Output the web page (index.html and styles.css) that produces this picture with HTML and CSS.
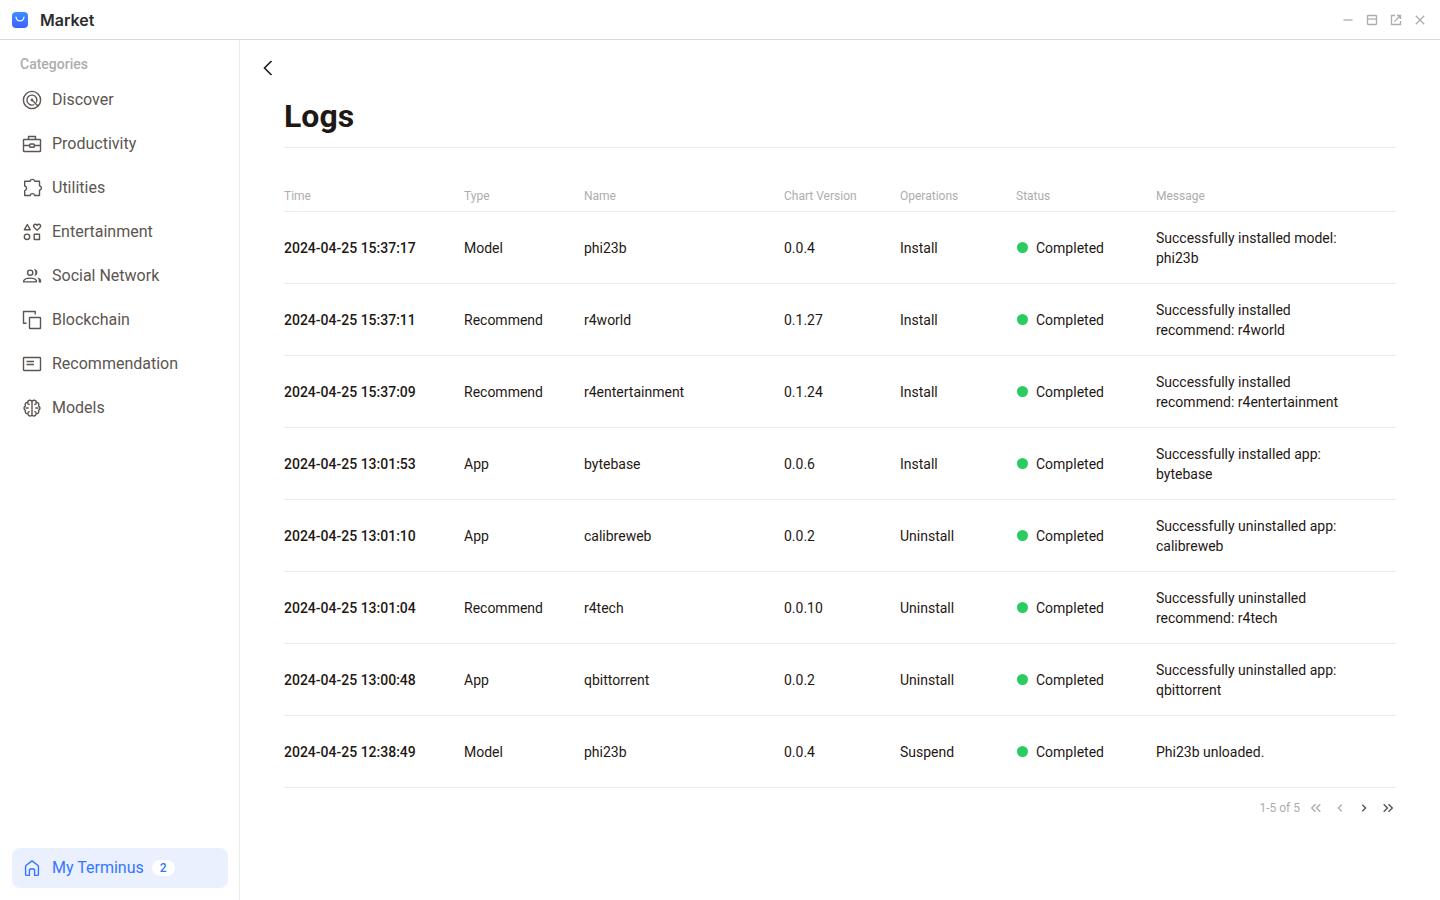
FILE: index.html
```html
<!DOCTYPE html>
<html lang="en">
<head>
<meta charset="utf-8">
<title>Market</title>
<link rel="stylesheet" href="styles.css">
</head>
<body>
<header class="titlebar">
  <svg class="logo" viewBox="0 0 16 16" aria-hidden="true">
    <defs><linearGradient id="logo-fill" x1="0" y1="0" x2="0" y2="1"><stop offset="0" stop-color="#3d8dff"/><stop offset="1" stop-color="#3d60ff"/></linearGradient></defs>
    <rect width="16" height="16" rx="4" fill="url(#logo-fill)"/>
    <path d="M4 5C4.600 10.200 11.400 10.200 12 5" fill="none" stroke="#fff" stroke-width="1.200" stroke-linecap="round"/>
  </svg>
  <span class="app-name">Market</span>
  <div class="window-controls">
    <button type="button" aria-label="Minimize"><svg viewBox="0 0 16 16"><path d="M3.500 8h9"/></svg></button>
    <button type="button" aria-label="Maximize"><svg viewBox="0 0 16 16"><rect x="3.500" y="3.500" width="9" height="9" rx="0.800"/><path d="M3.500 7h9"/></svg></button>
    <button type="button" aria-label="Open in new window"><svg viewBox="0 0 16 16"><path d="M7 3.500H3.500v9h9V9M9 3.500h3.500V7M12.500 3.500L6.500 9.500"/></svg></button>
    <button type="button" aria-label="Close"><svg viewBox="0 0 16 16"><path d="M3.800 3.800l8.400 8.400M12.200 3.800l-8.400 8.400"/></svg></button>
  </div>
</header>
<div class="shell">
  <aside class="sidebar">
    <h2 class="group-label">Categories</h2>
    <nav class="nav" aria-label="Categories">
      <a class="nav-item" href="#discover"><svg viewBox="0 0 24 24"><circle cx="12" cy="12" r="8.600"/><path d="M16.300 14.500a5 5 0 1 0-2 2M12 12l6.200 6.200"/><circle cx="11.900" cy="11.900" r="0.600"/></svg>Discover</a>
      <a class="nav-item" href="#productivity"><svg viewBox="0 0 24 24"><rect x="3.500" y="7.500" width="17" height="12" rx="0.600"/><path d="M8.500 7.300V4.500h7v2.800M3.500 13.500h6.200M14.300 13.500h6.200"/><rect x="9.700" y="12" width="4.600" height="3.200" rx="0.800"/></svg>Productivity</a>
      <a class="nav-item" href="#utilities"><svg viewBox="0 0 24 24"><path d="M4.700 5.200h5.500c.4-2.500 4.100-2.500 4.500 0h4.800v4.600c2.500.5 2.500 3.900 0 4.400v5.300h-4.800c-.5-2.500-4-2.500-4.500 0H4.700v-4.800c2.500-.5 2.500-4.200 0-4.700z"/></svg>Utilities</a>
      <a class="nav-item" href="#entertainment"><svg viewBox="0 0 24 24"><path d="M7.300 4.500l3 5.300H4.300zM17.100 10.200c-5.300-3.800-3.500-5.900-1.900-5.900 1 0 1.500.5 1.900 1.100.4-.6.900-1.100 1.900-1.100 1.600 0 3.400 2.100-1.900 5.900z"/><circle cx="7" cy="16.800" r="2.700"/><rect x="14.200" y="14.200" width="5.300" height="5.300"/></svg>Entertainment</a>
      <a class="nav-item" href="#social"><svg viewBox="0 0 24 24"><circle cx="10.200" cy="8.700" r="2.600"/><path d="M3.700 17.900v-1.100c1.500-3.600 11.200-3.600 12.700 0v1.100z"/><path class="solid" d="M14 5.400c4.100-.5 4.900 6.200.3 6.500 1.500-2.200 1.500-4.400-.3-6.500zM17.300 13.200c2.700.7 3.900 2 3.900 3.600v1.700h-2.500v-1.700c0-1.500-.5-2.500-1.400-3.600z"/></svg>Social Network</a>
      <a class="nav-item" href="#blockchain"><svg viewBox="0 0 24 24"><path d="M6.500 15.200h-3V3.500h11.700v3"/><rect x="9.500" y="9.500" width="11" height="11" rx="0.600"/></svg>Blockchain</a>
      <a class="nav-item" href="#recommendation"><svg viewBox="0 0 24 24"><rect x="3.500" y="5.500" width="17" height="13" rx="0.700"/><path d="M6.500 9.500h7.500M6.500 12.500h7.500"/></svg>Recommendation</a>
      <a class="nav-item" href="#models"><svg viewBox="0 0 24 24"><path d="M12 5.500C11 3.500 7.800 4 7.700 6.300 5.500 6.200 4.600 8.300 5.500 9.800c-2 1-2 3.600 0 4.600-.9 1.700.3 3.600 2.400 3.500.3 2.400 3.300 2.900 4.100.8zM12 5.500c1-2 4.200-1.500 4.300.8 2.200-.1 3.100 2 2.200 3.500 2 1 2 3.600 0 4.600.9 1.700-.3 3.600-2.400 3.500-.3 2.400-3.300 2.900-4.100.8M5.500 12h3.200M18.500 12h-3.200M7.700 6.300c0 1.400.8 2.200 2 2.300M16.300 6.300c0 1.400-.8 2.200-2 2.300M7.900 17.900c-.1-1.500.7-2.300 1.800-2.500M16.100 17.900c.1-1.500-.7-2.300-1.800-2.500"/></svg>Models</a>
    </nav>
    <a class="nav-item nav-item-active" href="#my-terminus"><svg viewBox="0 0 24 24"><path d="M5.600 9.800L12 4.900l6.400 4.900v8.700q0 .9-.9.900h-2.900v-5.500q0-.9-.9-.9h-3.400q-.9 0-.9.900v5.500H6.500q-.9 0-.9-.9z"/></svg>My Terminus<span class="badge">2</span></a>
  </aside>
  <main class="main">
    <button class="back" type="button" aria-label="Back"><svg viewBox="0 0 24 24"><path d="M15.500 5L8.500 12l7 7"/></svg></button>
    <section class="content">
      <h1 class="title">Logs</h1>
      <table class="logs">
        <colgroup><col class="col-time"><col class="col-type"><col class="col-name"><col class="col-version"><col class="col-operation"><col class="col-status"><col class="col-message"></colgroup>
        <thead><tr><th>Time</th><th>Type</th><th>Name</th><th>Chart Version</th><th>Operations</th><th>Status</th><th>Message</th></tr></thead>
        <tbody>
          <tr><td class="time">2024-04-25 15:37:17</td><td>Model</td><td>phi23b</td><td>0.0.4</td><td>Install</td><td><span class="status">Completed</span></td><td class="message">Successfully installed model: phi23b</td></tr>
          <tr><td class="time">2024-04-25 15:37:11</td><td>Recommend</td><td>r4world</td><td>0.1.27</td><td>Install</td><td><span class="status">Completed</span></td><td class="message">Successfully installed recommend: r4world</td></tr>
          <tr><td class="time">2024-04-25 15:37:09</td><td>Recommend</td><td>r4entertainment</td><td>0.1.24</td><td>Install</td><td><span class="status">Completed</span></td><td class="message">Successfully installed recommend: r4entertainment</td></tr>
          <tr><td class="time">2024-04-25 13:01:53</td><td>App</td><td>bytebase</td><td>0.0.6</td><td>Install</td><td><span class="status">Completed</span></td><td class="message">Successfully installed app: bytebase</td></tr>
          <tr><td class="time">2024-04-25 13:01:10</td><td>App</td><td>calibreweb</td><td>0.0.2</td><td>Uninstall</td><td><span class="status">Completed</span></td><td class="message">Successfully uninstalled app: calibreweb</td></tr>
          <tr><td class="time">2024-04-25 13:01:04</td><td>Recommend</td><td>r4tech</td><td>0.0.10</td><td>Uninstall</td><td><span class="status">Completed</span></td><td class="message">Successfully uninstalled recommend: r4tech</td></tr>
          <tr><td class="time">2024-04-25 13:00:48</td><td>App</td><td>qbittorrent</td><td>0.0.2</td><td>Uninstall</td><td><span class="status">Completed</span></td><td class="message">Successfully uninstalled app: qbittorrent</td></tr>
          <tr><td class="time">2024-04-25 12:38:49</td><td>Model</td><td>phi23b</td><td>0.0.4</td><td>Suspend</td><td><span class="status">Completed</span></td><td class="message">Phi23b unloaded.</td></tr>
        </tbody>
      </table>
      <div class="pager">
        <span class="range">1-5 of 5</span>
        <button type="button" aria-label="First page" disabled><svg viewBox="0 0 16 16"><path d="M7.500 4.200L3.700 8l3.800 3.800M12.300 4.200L8.500 8l3.800 3.800"/></svg></button>
        <button type="button" aria-label="Previous page" disabled><svg viewBox="0 0 16 16"><path d="M9.700 4.700L6.400 8l3.300 3.300"/></svg></button>
        <button type="button" aria-label="Next page"><svg viewBox="0 0 16 16"><path d="M6.300 4.700L9.600 8l-3.300 3.300"/></svg></button>
        <button type="button" aria-label="Last page"><svg viewBox="0 0 16 16"><path d="M3.700 4.200L7.500 8l-3.800 3.800M8.500 4.200L12.300 8l-3.800 3.800"/></svg></button>
      </div>
    </section>
  </main>
</div>
</body>
</html>
```
FILE: styles.css
```css
* { box-sizing: border-box; }
body {
  margin: 0;
  min-height: 100vh;
  display: flex;
  flex-direction: column;
  font-family: Roboto, "Liberation Sans", sans-serif;
  color: #1f1814;
  background: #fff;
}
button {
  display: flex;
  padding: 0;
  border: 0;
  background: none;
  color: inherit;
  cursor: pointer;
}
svg {
  display: block;
  flex: none;
  fill: none;
  stroke: currentColor;
}
.titlebar {
  display: flex;
  align-items: center;
  gap: 12px;
  height: 40px;
  padding: 0 12px;
  border-bottom: 1px solid #d8d8d8;
}
.logo { width: 16px; height: 16px; stroke: none; }
.app-name {
  font-family: Inter, Roboto, sans-serif;
  font-size: 16px;
  line-height: 24px;
  font-weight: 600;
  color: #2c2c2c;
}
.window-controls { display: flex; gap: 8px; margin-left: auto; color: #adadad; }
.window-controls svg { width: 16px; height: 16px; stroke-width: 1.3; }
.shell { flex: 1; display: flex; }
.sidebar {
  flex: none;
  display: flex;
  flex-direction: column;
  width: 240px;
  padding: 16px 11px 12px 12px;
  border-right: 1px solid #ebebeb;
}
.group-label {
  margin: 0;
  padding: 0 8px;
  font-size: 14px;
  line-height: 16px;
  font-weight: 500;
  color: #adadad;
}
.nav {
  display: flex;
  flex-direction: column;
  gap: 4px;
  margin-top: 8px;
}
.nav-item {
  display: flex;
  align-items: center;
  gap: 8px;
  height: 40px;
  padding: 0 8px;
  border-radius: 8px;
  font-size: 16px;
  line-height: 24px;
  color: #5c5551;
  text-decoration: none;
}
.nav-item svg { width: 24px; height: 24px; stroke-width: 1.4; stroke-linejoin: round; }
.nav-item .solid { fill: currentColor; stroke: none; }
.nav-item-active {
  margin-top: auto;
  background: #ebf0ff;
  color: #3377ff;
}
.badge {
  padding: 0 8px;
  border-radius: 8px;
  background: #fff;
  font-size: 12px;
  line-height: 16px;
  font-weight: 500;
}
.main { flex: 1; min-width: 0; }
.back { margin: 16px 0 0 16px; }
.back svg { width: 24px; height: 24px; stroke-width: 1.6; }
.content { padding: 16px 44px; }
.title {
  margin: 0;
  padding-bottom: 11px;
  border-bottom: 1px solid #ebebeb;
  font-size: 32px;
  line-height: 40px;
  font-weight: 700;
}
.logs {
  width: 100%;
  margin-top: 32px;
  table-layout: fixed;
  border-collapse: separate;
  border-spacing: 0;
}
.col-time { width: 180px; }
.col-type { width: 120px; }
.col-name { width: 200px; }
.col-version { width: 116px; }
.col-operation { width: 116px; }
.col-status { width: 140px; }
.logs th, .logs td {
  padding: 0;
  border-bottom: 1px solid #ebebeb;
  text-align: left;
}
.logs th {
  height: 32px;
  font-size: 12px;
  line-height: 16px;
  font-weight: 400;
  color: #adadad;
}
.logs td {
  height: 72px;
  font-size: 14px;
  line-height: 20px;
}
.logs .time { font-weight: 500; }
.logs .message { padding-right: 40px; }
.status { display: flex; align-items: center; gap: 8px; padding-left: 1px; }
.status::before {
  content: "";
  width: 11px;
  height: 11px;
  border-radius: 50%;
  background: #29cc5f;
}
.pager {
  display: flex;
  align-items: center;
  justify-content: flex-end;
  gap: 8px;
  margin-top: 12px;
  color: #5c5551;
}
.range { font-size: 12px; line-height: 16px; color: #adadad; }
.pager svg { width: 16px; height: 16px; stroke-width: 1.4; }
.pager button:disabled { color: #adadad; }
```
